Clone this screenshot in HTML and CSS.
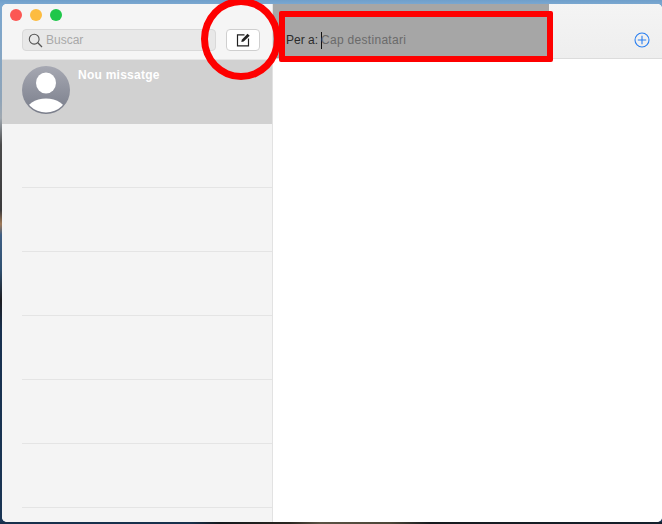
FILE: index.html
```html
<!DOCTYPE html>
<html lang="ca">
<head>
<meta charset="utf-8">
<title>Missatges</title>
<link rel="stylesheet" href="styles.css">
</head>
<body>
<div class="desktop">
  <div class="window">
    <aside class="sidebar">
      <div class="side-head">
        <div class="lights"><span class="light red"></span><span class="light yellow"></span><span class="light green"></span></div>
        <div class="tools">
          <div class="search">
            <svg class="search-icon" width="15" height="15" viewBox="0 0 15 15"><circle cx="6.2" cy="6.2" r="4.9" fill="none" stroke="#555" stroke-width="1.1"/><path d="M9.8 9.8L14 14" stroke="#555" stroke-width="1.3" fill="none"/></svg>
            <span>Buscar</span>
          </div>
          <button class="compose">
            <svg width="15" height="15" viewBox="0 0 15 15"><path d="M8.500 2.800H1.500v11h11V6.500" fill="none" stroke="#222" stroke-width="1.200"/><path d="M5.300 10L5.800 7.700 11.500 1.800 13.700 3.800 7.700 9.500Z" fill="#222"/></svg>
          </button>
        </div>
      </div>
      <div class="selected">
        <svg class="avatar" width="48" height="48" viewBox="0 0 48 48">
          <defs>
            <linearGradient id="ag" x1="0" y1="0" x2="0" y2="1"><stop offset="0" stop-color="#a6a8b2"/><stop offset="1" stop-color="#797d8a"/></linearGradient>
            <clipPath id="ac"><circle cx="24" cy="24" r="22.500"/></clipPath>
          </defs>
          <circle cx="24" cy="24" r="24" fill="url(#ag)"/>
          <ellipse cx="24" cy="17" rx="10" ry="10.500" fill="#fff"/>
          <ellipse cx="24" cy="46" rx="20" ry="13.500" fill="#fff" clip-path="url(#ac)"/>
        </svg>
        <div class="sel-name">Nou missatge</div>
      </div>
      <div class="rows">
        <div class="row"></div>
        <div class="row"></div>
        <div class="row"></div>
        <div class="row"></div>
        <div class="row"></div>
        <div class="row"></div>
      </div>
    </aside>
    <main class="main">
      <div class="main-head">
        <div class="to-field">
          <span class="to-label">Per a:</span><span class="caret"></span><span class="to-hint">Cap destinatari</span>
        </div>
        <svg class="add" width="16" height="16" viewBox="0 0 16 16"><circle cx="8" cy="8" r="7" fill="none" stroke="#2a7ff0" stroke-width="1.100"/><path d="M8 3.800V12.200M3.800 8H12.200" stroke="#2a7ff0" stroke-width="1.100" fill="none"/></svg>
      </div>
    </main>
  </div>
  <div class="mark-circle"></div>
  <div class="mark-rect"></div>
</div>
</body>
</html>
```
FILE: styles.css
```css
* { box-sizing: border-box; }
html, body { margin: 0; padding: 0; }
body { font-family: "Liberation Sans", Arial, sans-serif; }
.desktop {
  position: relative;
  width: 662px;
  height: 524px;
  overflow: hidden;
  padding: 4px 0 2px 2px;
  background:
    linear-gradient(to right, #17304c 0, #17304c 190px, #14181c 220px, #2a2620 290px, #5a5244 320px, #4c4638 390px, #171a1e 430px, #14202c 662px) bottom left / 100% 2px no-repeat,
    linear-gradient(to bottom, #6f9fcb 0, #7aa7d0 4px, #8fa4b8 100px, #a0a8b0 118px, #4a4a4a 145px, #3a3a3c 210px, #a07a58 224px, #3f5f85 235px, #2f5070 270px, #1c1c20 300px, #17304f 330px, #1a3554 524px) top left / 100% 100% no-repeat;
}
.window {
  display: flex;
  height: 518px;
  background: #fff;
  border-radius: 5px;
  overflow: hidden;
}
.sidebar {
  width: 271px;
  flex: none;
  background: #f4f4f4;
  border-right: 1px solid #e2e2e2;
}
.side-head {
  height: 56px;
  padding: 5px 0 0 8px;
  background: #f5f5f5;
  border-bottom: 1px solid #e6e6e6;
}
.lights { display: flex; gap: 8px; }
.light { width: 12px; height: 12px; border-radius: 50%; }
.red { background: #fc5753; }
.yellow { background: #fdbc40; }
.green { background: #1fc74a; }
.tools {
  display: flex;
  align-items: center;
  gap: 10px;
  padding: 8px 0 0 12px;
}
.search {
  width: 194px;
  height: 22px;
  display: flex;
  align-items: center;
  gap: 3px;
  padding-left: 5px;
  background: #e8e8e8;
  border: 1px solid #d9d9d9;
  border-radius: 4px;
  color: #a8a8a8;
  font-size: 12px;
}
.compose {
  width: 34px;
  height: 22px;
  padding: 0 0 2px 1px;
  display: flex;
  align-items: center;
  justify-content: center;
  background: #fff;
  border: 1px solid #cfcfcf;
  border-radius: 4px;
}
.selected {
  height: 64px;
  display: flex;
  align-items: flex-start;
  gap: 8px;
  padding: 6px 0 0 20px;
  background: #d1d1d1;
}
.avatar { flex: none; }
.sel-name {
  color: #fff;
  font-size: 12px;
  font-weight: 700;
  letter-spacing: 0.25px;
  margin-top: 2px;
}
.rows { padding-left: 20px; }
.row { height: 64px; border-bottom: 1px solid #e4e4e4; }
.main { flex: 1; background: #fff; }
.main-head {
  position: relative;
  height: 55px;
  background: linear-gradient(to right, #a6a6a6 0, #a6a6a6 276px, transparent 276px), linear-gradient(to bottom, #f4f4f4, #eeeeee);
  border-bottom: 1px solid #dcdcdc;
}
.to-field {
  display: flex;
  align-items: center;
  height: 20px;
  position: absolute;
  left: 13px;
  top: 26px;
  font-size: 12px;
}
.to-label { color: #2b2b2b; margin-right: 3px; }
.caret { width: 1px; height: 17px; background: #111; }
.to-hint { color: #6a6a6a; letter-spacing: 0.3px; margin-left: -1px; }
.add { position: absolute; right: 12px; top: 28px; }
.mark-circle {
  position: absolute;
  left: 201px;
  top: -2px;
  width: 80px;
  height: 82px;
  border: 7px solid #fe0000;
  border-radius: 50%;
}
.mark-rect {
  position: absolute;
  left: 279px;
  top: 11px;
  width: 274px;
  height: 51px;
  border: 6px solid #fe0000;
  border-radius: 2px;
}
```
